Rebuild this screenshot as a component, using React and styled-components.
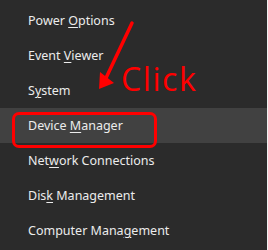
import React from "react";
import styled, { createGlobalStyle } from "styled-components";

const Global = createGlobalStyle`
  html, body { margin: 0; padding: 0; background: #f2f2f2; }
  #root { width: 268px; height: 250px; }
`;

const Panel = styled.div`
  position: relative;
  width: 267px;
  height: 250px;
  background: #2b2b2b;
  padding-top: 3px;
  box-sizing: border-box;
  overflow: hidden;
  font-family: "Noto Sans", "Open Sans", sans-serif;
`;

const List = styled.ul`
  list-style: none;
  margin: 0;
  padding: 0;
  display: flex;
  flex-direction: column;
`;

const Item = styled.li`
  position: relative;
  height: 35px;
  display: flex;
  align-items: center;
  padding-left: 28px;
  font-size: 12.5px;
  color: #ececec;
  background: ${(p) => (p.$active ? "#414141" : "transparent")};
  white-space: pre;
`;

const Key = styled.span`
  text-decoration: underline;
  text-underline-offset: 2px;
  text-decoration-thickness: 1px;
`;

const Highlight = styled.div`
  position: absolute;
  left: 12px;
  top: 4px;
  width: 145px;
  height: 36px;
  box-sizing: border-box;
  border: 3px solid #ff0000;
  border-radius: 7px;
`;

const Arrow = styled.svg`
  position: absolute;
  left: 0;
  top: 0;
  pointer-events: none;
`;

const ClickLabel = styled.div`
  position: absolute;
  left: 121px;
  top: 58px;
  font-family: "Open Sans", "Noto Sans", sans-serif;
  font-size: 32px;
  line-height: 42px;
  letter-spacing: 1.6px;
  color: #ff0000;
`;

const items = [
  ["Power ", "O", "ptions"],
  ["Event ", "V", "iewer"],
  ["S", "y", "stem"],
  ["Device ", "M", "anager", true],
  ["Net", "w", "ork Connections"],
  ["Dis", "k", " Management"],
  ["Computer Mana", "g", "ement"],
];

export default function App() {
  return (
    <>
      <Global />
      <Panel>
        <List>
          {items.map(([a, k, b, active]) => (
            <Item key={a + k + b} $active={active}>
              {a}
              <Key>{k}</Key>
              {b}
              {active && <Highlight />}
            </Item>
          ))}
        </List>
        <Arrow width="267" height="250" viewBox="0 0 267 250">
          <line x1="132" y1="23" x2="106" y2="78" stroke="#ff0000" strokeWidth="3.5" strokeLinecap="round" />
          <polygon points="99,89 100,72 114,83" fill="#ff0000" />
        </Arrow>
        <ClickLabel>Click</ClickLabel>
      </Panel>
    </>
  );
}
